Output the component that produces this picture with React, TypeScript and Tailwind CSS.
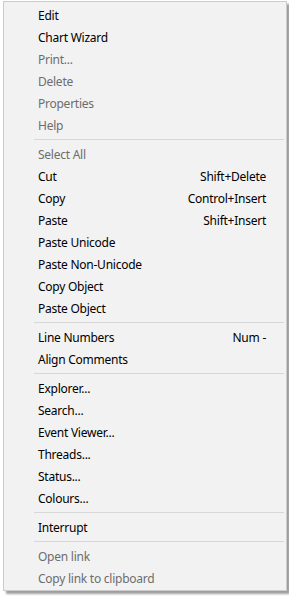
import React from "react";

type Item = { label: string; shortcut?: string; disabled?: boolean } | "sep";

const items: Item[] = [
  { label: "Edit" },
  { label: "Chart Wizard" },
  { label: "Print...", disabled: true },
  { label: "Delete", disabled: true },
  { label: "Properties", disabled: true },
  { label: "Help", disabled: true },
  "sep",
  { label: "Select All", disabled: true },
  { label: "Cut", shortcut: "Shift+Delete" },
  { label: "Copy", shortcut: "Control+Insert" },
  { label: "Paste", shortcut: "Shift+Insert" },
  { label: "Paste Unicode" },
  { label: "Paste Non-Unicode" },
  { label: "Copy Object" },
  { label: "Paste Object" },
  "sep",
  { label: "Line Numbers", shortcut: "Num -" },
  { label: "Align Comments" },
  "sep",
  { label: "Explorer..." },
  { label: "Search..." },
  { label: "Event Viewer..." },
  { label: "Threads..." },
  { label: "Status..." },
  { label: "Colours..." },
  "sep",
  { label: "Interrupt" },
  "sep",
  { label: "Open link", disabled: true },
  { label: "Copy link to clipboard", disabled: true },
];

export default function App() {
  return (
    <div className="w-[289px] h-[598px] bg-white pt-[1px] pl-[3px]">
      <div
        className="w-[284px] border border-[#cccccc] bg-[#f2f2f2] pt-[2px] pb-[1px] shadow-[3px_3px_2px_rgba(0,0,0,0.38)] text-[12px] tracking-[-0.25px]"
        style={{ fontFamily: '"Noto Sans", "Open Sans", sans-serif' }}
      >
        {items.map((it, i) =>
          it === "sep" ? (
            <div key={i} className="h-[7px] flex items-center pl-[30px] pr-[2px]">
              <div className="h-px w-full bg-[#d7d7d7]" />
            </div>
          ) : (
            <div
              key={i}
              className={`h-[22px] flex items-center justify-between pt-[2px] pl-[34px] pr-[20px] ${
                it.disabled ? "text-[#6d6d6d]" : "text-black"
              }`}
            >
              <span>{it.label}</span>
              {it.shortcut && <span>{it.shortcut}</span>}
            </div>
          )
        )}
      </div>
    </div>
  );
}
